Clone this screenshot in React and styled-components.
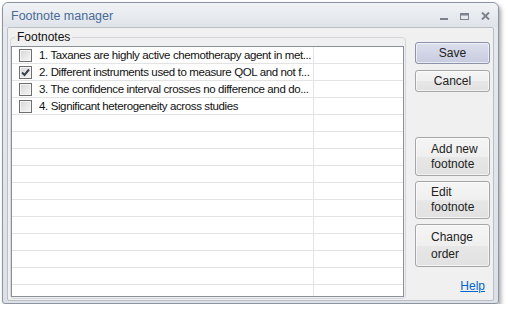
import styled, { createGlobalStyle } from 'styled-components';

const GlobalStyle = createGlobalStyle`
  *, *::before, *::after {
    box-sizing: border-box;
  }
  body {
    margin: 0;
    background: #ffffff;
    font-family: "Liberation Sans", Arial, sans-serif;
  }
`;

const Page = styled.div`
  padding: 2px 0 0 2px;
`;

const Window = styled.div`
  width: 497px;
  height: 302px;
  border: 1px solid #8c94a0;
  border-radius: 6px 6px 3px 3px;
  background: linear-gradient(#e6e9ee, #dde1e7);
  box-shadow: 2px 3px 4px rgba(0, 0, 0, 0.35);
  display: flex;
  flex-direction: column;
`;

const TitleBar = styled.div`
  height: 24px;
  flex-shrink: 0;
  display: flex;
  align-items: center;
  justify-content: space-between;
  padding: 2px 8px 0 8px;
  border-radius: 6px 6px 0 0;
  background: linear-gradient(#f1f3f6, #dfe3e9);
`;

const Title = styled.span`
  font-size: 12.5px;
  color: #4a6b98;
`;

const Controls = styled.div`
  display: flex;
  align-items: flex-end;
  gap: 12px;
`;

const Client = styled.div`
  flex: 1;
  min-height: 0;
  margin: 0 4px 2px 4px;
  border: 1px solid #b9bec7;
  border-radius: 2px;
  background: #f0f0f0;
  display: flex;
  gap: 9px;
  padding: 2px 3px 1px 2px;
`;

const Group = styled.fieldset`
  margin: 0;
  width: 396px;
  min-height: 0;
  padding: 0 1px 1px 0;
  border: 1px solid #d3d6db;
  border-radius: 4px;
  display: flex;
  flex-direction: column;
`;

const Legend = styled.legend`
  margin-left: 4px;
  padding: 0 2px;
  font-size: 12px;
  line-height: 14px;
  color: #111111;
`;

const List = styled.div`
  flex: 1;
  min-height: 0;
  margin-top: 2px;
  border: 1px solid #8a8f99;
  background: #ffffff;
  overflow: hidden;
  position: relative;
`;

const Divider = styled.div`
  position: absolute;
  top: 0;
  bottom: 0;
  left: 301px;
  width: 1px;
  background: #e3e3e3;
`;

const Row = styled.div`
  height: 17px;
  border-bottom: 1px solid #e3e3e3;
  display: flex;
  align-items: center;
  padding-left: 7px;
  gap: 7px;
  font-size: 11.5px;
  letter-spacing: -0.38px;
  color: #111111;
  white-space: nowrap;
`;

const Box = styled.span`
  width: 13px;
  height: 13px;
  border: 1px solid #6f6f6f;
  background: linear-gradient(135deg, #d6d6d6, #f7f7f7);
  box-shadow: inset 0 0 0 1px #f4f4f4;
  display: flex;
  align-items: center;
  justify-content: center;
  flex-shrink: 0;
`;

const Label = styled.span`
  width: 274px;
  overflow: hidden;
`;

const Side = styled.div`
  width: 75px;
  display: flex;
  flex-direction: column;
  padding-top: 12px;
`;

const Button = styled.button`
  width: 75px;
  height: ${(p) => p.$h || 22}px;
  margin: 0 0 ${(p) => p.$gap || 5}px 0;
  border: 1px solid ${(p) => (p.$active ? '#8c93a8' : '#a6a6a6')};
  border-radius: 3px;
  background: ${(p) =>
    p.$active
      ? 'linear-gradient(#dcdfec, #c7cbdf)'
      : 'linear-gradient(#f5f5f5 0%, #efefef 50%, #e7e7e7 52%, #e1e1e1 100%)'};
  box-shadow: inset 0 0 0 1px rgba(255, 255, 255, 0.6);
  font-family: "Liberation Sans", Arial, sans-serif;
  font-size: 12px;
  color: #222222;
  padding: ${(p) => (p.$multi ? '0 0 0 15px' : '0')};
  text-align: ${(p) => (p.$multi ? 'left' : 'center')};
  line-height: ${(p) => p.$lh || 15}px;
`;

const Spacer = styled.div`
  height: 40px;
  flex-shrink: 0;
`;

const Help = styled.a`
  align-self: flex-end;
  margin: 7px 5px 0 0;
  font-size: 12px;
  line-height: 14px;
  color: #0066cc;
  text-decoration: underline;
`;

const footnotes = [
  { text: '1. Taxanes are highly active chemotherapy agent in met...', checked: false },
  { text: '2. Different instruments used to measure QOL and not f...', checked: true },
  { text: '3. The confidence interval crosses no difference and do...', checked: false },
  { text: '4. Significant heterogeneity across studies', checked: false },
];

const Check = () => (
  <svg width="9" height="9" viewBox="0 0 9 9">
    <path d="M1 4.5 L3.5 7 L8 1.5" fill="none" stroke="#3a414c" strokeWidth="2" />
  </svg>
);

const App = () => {
  const rows = [...footnotes, ...Array(11).fill(null)];
  return (
    <Page>
      <GlobalStyle />
      <Window>
        <TitleBar>
          <Title>Footnote manager</Title>
          <Controls>
            <svg width="8" height="8" viewBox="0 0 8 8">
              <rect x="0" y="6" width="8" height="2" fill="#7d838e" />
            </svg>
            <svg width="9" height="7" viewBox="0 0 9 7">
              <rect x="0.5" y="0.5" width="8" height="6" fill="none" stroke="#7d838e" />
              <rect x="0" y="0" width="9" height="2.5" fill="#7d838e" />
            </svg>
            <svg width="9" height="8" viewBox="0 0 9 8">
              <path d="M1 0.5 L8 7.5 M8 0.5 L1 7.5" stroke="#7d838e" strokeWidth="2" />
            </svg>
          </Controls>
        </TitleBar>
        <Client>
          <Group>
            <Legend>Footnotes</Legend>
            <List>
              <Divider />
              {rows.map((f, i) => (
                <Row key={i}>
                  {f && (
                    <>
                      <Box>{f.checked && <Check />}</Box>
                      <Label>{f.text}</Label>
                    </>
                  )}
                </Row>
              ))}
            </List>
          </Group>
          <Side>
            <Button $active $gap={6}>Save</Button>
            <Button>Cancel</Button>
            <Spacer />
            <Button $h={39} $multi>Add new<br />footnote</Button>
            <Button $h={38} $multi>Edit<br />footnote</Button>
            <Button $h={43} $multi $lh={17}>Change<br />order</Button>
            <Help href="#help">Help</Help>
          </Side>
        </Client>
      </Window>
    </Page>
  );
};

export default App;
